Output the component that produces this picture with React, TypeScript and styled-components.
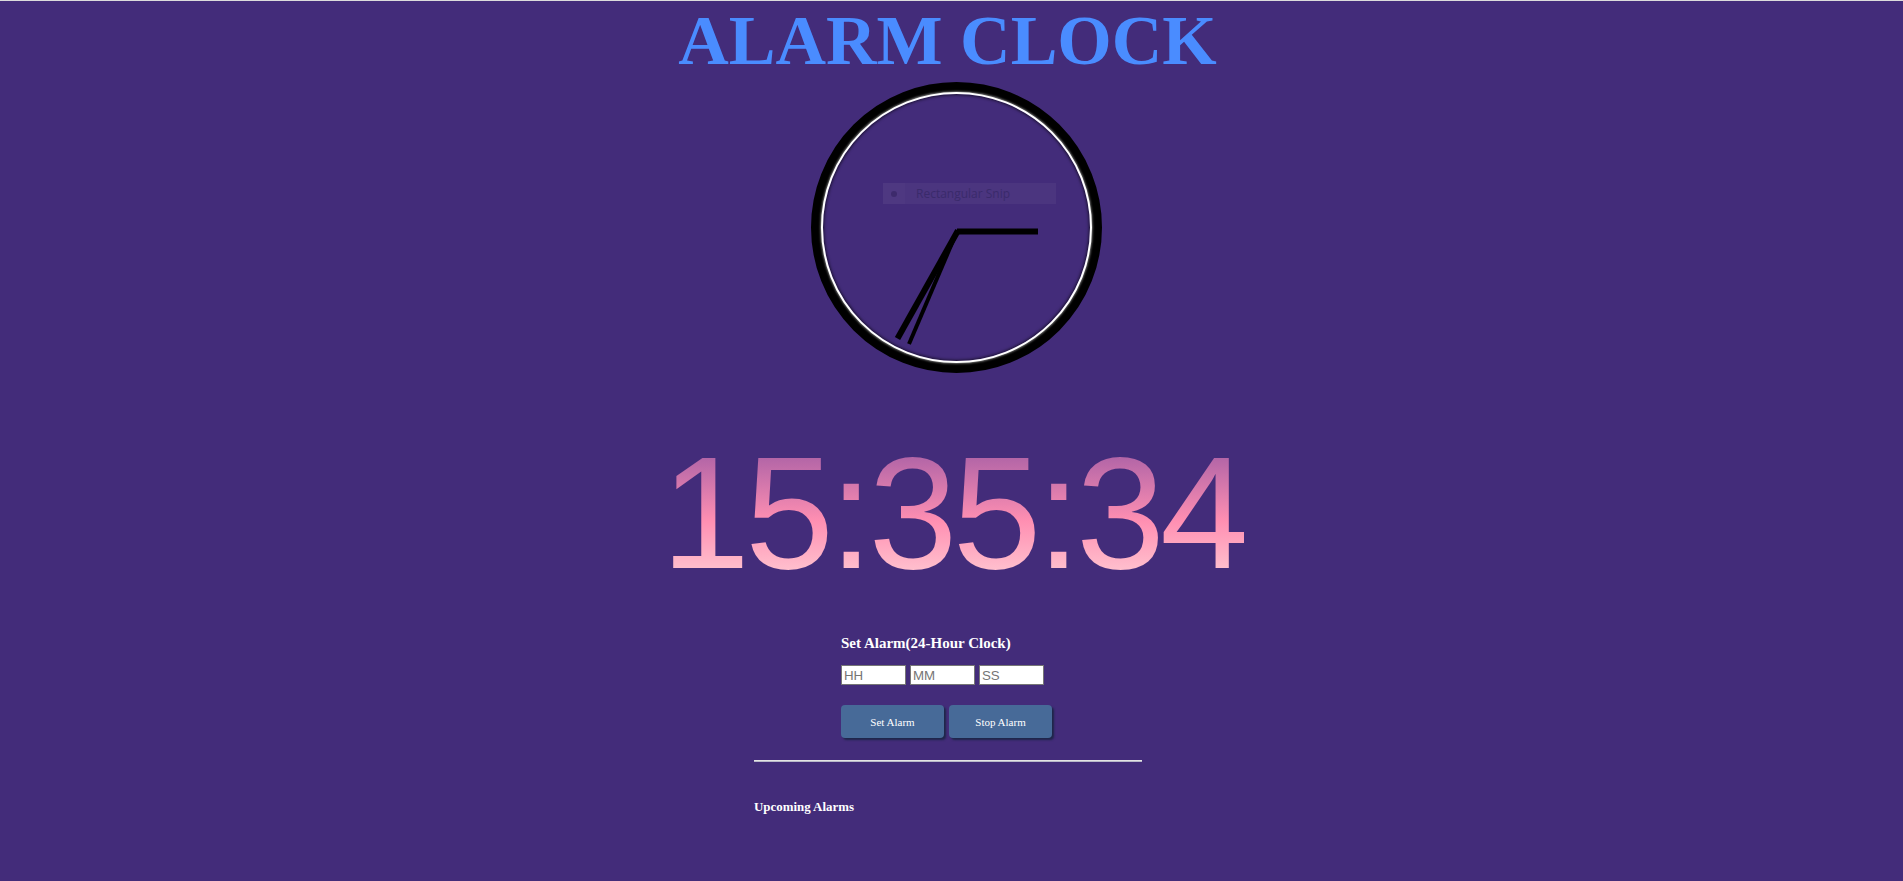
import React from "react";
import styled, { createGlobalStyle } from "styled-components";

const GlobalStyle = createGlobalStyle`
  html, body {
    margin: 0;
    padding: 0;
    background: #432c7a;
  }
  body {
    border-top: 1px solid #dcdcdc;
    min-height: 880px;
    font-family: "Liberation Serif", "Times New Roman", serif;
    overflow: hidden;
  }
`;

const Page = styled.main`
  display: flex;
  flex-direction: column;
  align-items: center;
`;

const Title = styled.h1`
  margin: 0;
  font-family: "Liberation Serif", "Times New Roman", serif;
  font-weight: 700;
  font-size: 70px;
  line-height: 79px;
  color: #4a8cff;
  transform: translateX(-4px);
`;

const ClockRing = styled.div`
  position: relative;
  box-sizing: border-box;
  width: 291px;
  height: 291px;
  margin-top: 2px;
  margin-left: 10px;
  border-radius: 50%;
  border: 10px solid #000;
  background: #000;
`;

const ClockFace = styled.div`
  position: relative;
  box-sizing: border-box;
  width: 100%;
  height: 100%;
  border-radius: 50%;
  border: 2.5px solid #fff;
  background: #432c7a;
  box-shadow: inset 0 0 3px 1px rgba(0, 0, 0, 0.6), 0 0 2px 1px rgba(255, 255, 255, 0.4);
`;

const Hands = styled.svg`
  position: absolute;
  left: -10px;
  top: -10px;
  width: 291px;
  height: 291px;
  overflow: visible;
`;

const SnipBar = styled.div`
  position: absolute;
  left: 60px;
  top: 89px;
  width: 173px;
  height: 21px;
  display: flex;
  align-items: center;
  background: rgba(255, 255, 255, 0.045);
`;

const SnipIcon = styled.span`
  width: 22px;
  height: 100%;
  display: flex;
  align-items: center;
  justify-content: center;
  background: rgba(255, 255, 255, 0.02);
`;

const SnipDot = styled.span`
  width: 6px;
  height: 6px;
  border-radius: 50%;
  background: #3d2a6c;
`;

const SnipLabel = styled.span`
  margin-left: 11px;
  font-family: "Open Sans", "Noto Sans", sans-serif;
  font-size: 12px;
  color: #3a2a6b;
  white-space: nowrap;
`;

const TimeText = styled.div`
  margin-top: 60px;
  font-family: "Liberation Sans", Arial, sans-serif;
  font-size: 160px;
  line-height: 160px;
  letter-spacing: -5px;
  background: linear-gradient(to bottom, #ad62a6 12%, #ff8fb2 55%, #ffc9d3 92%);
  -webkit-background-clip: text;
  background-clip: text;
  color: transparent;
  transform: translateX(1px);
`;

const Lower = styled.section`
  align-self: flex-start;
  box-sizing: border-box;
  width: 388px;
  margin-left: calc(50% - 197.5px);
  display: flex;
  flex-direction: column;
`;

const AlarmForm = styled.div`
  margin: 42px 0 0 87px;
  display: flex;
  flex-direction: column;
  align-items: flex-start;
`;

const FormLabel = styled.h3`
  margin: 0;
  font-size: 15px;
  font-weight: 700;
  color: #fff;
`;

const InputRow = styled.div`
  display: flex;
  gap: 4px;
  margin-top: 13px;
`;

const TimeInput = styled.input`
  box-sizing: border-box;
  width: 65px;
  height: 20px;
  padding: 1px 2px;
  border: 1px solid #767676;
  background: #fff;
  font-family: "Liberation Sans", Arial, sans-serif;
  font-size: 13.3px;
  color: #000;
  &::placeholder {
    color: #757575;
  }
`;

const ButtonRow = styled.div`
  display: flex;
  gap: 5px;
  margin-top: 20px;
`;

const ActionButton = styled.button`
  width: 103px;
  height: 33px;
  border: none;
  border-radius: 4px;
  background: #476a98;
  color: #fff;
  font-family: "Liberation Serif", "Times New Roman", serif;
  font-size: 11px;
  box-shadow: 2px 2px 2px #1e2649;
  cursor: pointer;
`;

const Divider = styled.hr`
  width: 100%;
  margin: 22px 0 0 0;
  height: 0;
  border: none;
  border-top: 1px solid #e4e4e4;
  border-bottom: 1px solid #b9b9c9;
`;

const Upcoming = styled.h5`
  margin: 38px 0 0 0;
  font-size: 12.9px;
  font-weight: 700;
  color: #fff;
`;

const cx = 146;
const cy = 149.5;

export default function App() {
  return (
    <>
      <GlobalStyle />
      <Page>
        <Title>ALARM CLOCK</Title>
        <ClockRing>
          <ClockFace>
            <SnipBar>
              <SnipIcon>
                <SnipDot />
              </SnipIcon>
              <SnipLabel>Rectangular Snip</SnipLabel>
            </SnipBar>
          </ClockFace>
          <Hands viewBox="0 0 291 291">
            <line x1={cx} y1={cy} x2={227} y2={cy} stroke="#000" strokeWidth={6} />
            <line x1={cx + 1} y1={cy - 1} x2={86.5} y2={256.5} stroke="#000" strokeWidth={6} />
            <line x1={cx} y1={cy} x2={98} y2={262} stroke="#000" strokeWidth={4} />
          </Hands>
        </ClockRing>
        <TimeText>15:35:34</TimeText>
        <Lower>
          <AlarmForm>
            <FormLabel>Set Alarm(24-Hour Clock)</FormLabel>
            <InputRow>
              <TimeInput placeholder="HH" />
              <TimeInput placeholder="MM" />
              <TimeInput placeholder="SS" />
            </InputRow>
            <ButtonRow>
              <ActionButton>Set Alarm</ActionButton>
              <ActionButton>Stop Alarm</ActionButton>
            </ButtonRow>
          </AlarmForm>
          <Divider />
          <Upcoming>Upcoming Alarms</Upcoming>
        </Lower>
      </Page>
    </>
  );
}
